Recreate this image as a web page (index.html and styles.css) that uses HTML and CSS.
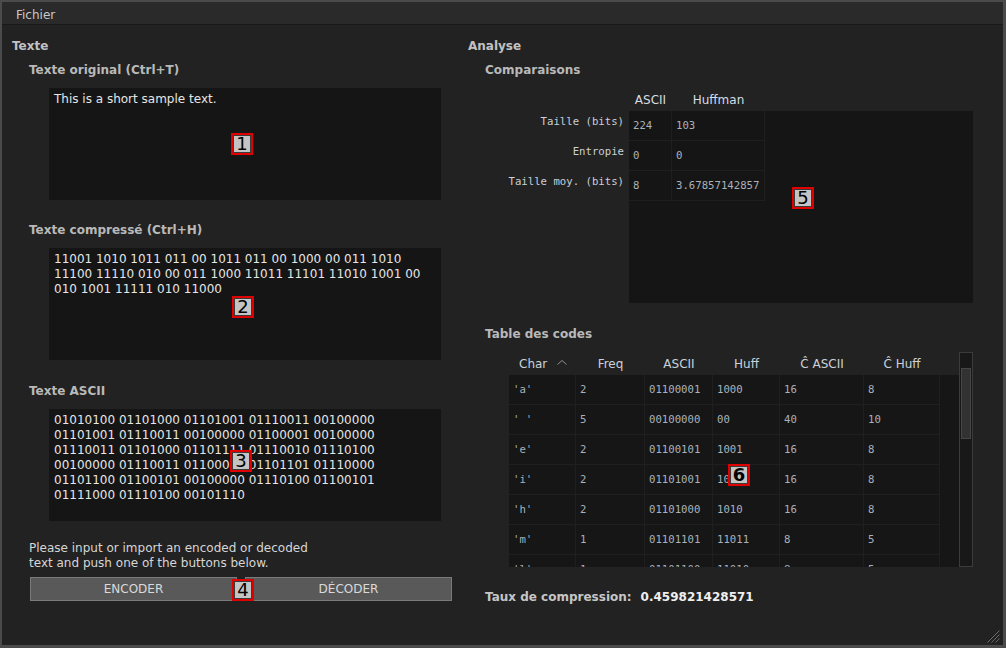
FILE: index.html
```html
<!DOCTYPE html>
<html lang="fr">
<head>
<meta charset="utf-8">
<title>Huffman</title>
<link rel="stylesheet" href="styles.css">
</head>
<body>
<div class="app">
  <div class="menubar"><span class="menu-item">Fichier</span></div>
  <div class="main">
    <section class="panel panel-left">
      <h2 class="group-title">Texte</h2>
      <div class="field field-first">
        <h3 class="sub-title">Texte original (Ctrl+T)</h3>
        <div class="textbox">This is a short sample text.</div>
      </div>
      <div class="field field-second">
        <h3 class="sub-title">Texte compressé (Ctrl+H)</h3>
        <div class="textbox">11001 1010 1011 011 00 1011 011 00 1000 00 011 1010<br>11100 11110 010 00 011 1000 11011 11101 11010 1001 00<br>010 1001 11111 010 11000</div>
      </div>
      <div class="field field-third">
        <h3 class="sub-title">Texte ASCII</h3>
        <div class="textbox">01010100 01101000 01101001 01110011 00100000<br>01101001 01110011 00100000 01100001 00100000<br>01110011 01101000 01101111 01110010 01110100<br>00100000 01110011 01100001 01101101 01110000<br>01101100 01100101 00100000 01110100 01100101<br>01111000 01110100 00101110</div>
      </div>
      <p class="hint">Please input or import an encoded or decoded<br>text and push one of the buttons below.</p>
      <div class="buttons">
        <button class="btn">ENCODER</button>
        <button class="btn">DÉCODER</button>
      </div>
    </section>

    <section class="panel panel-right">
      <h2 class="group-title">Analyse</h2>
      <h3 class="sub-title sub-first">Comparaisons</h3>
      <div class="compare">
        <div class="corner"></div>
        <div class="cmp-head">
          <div class="hcell c-ascii">ASCII</div>
          <div class="hcell c-huff">Huffman</div>
        </div>
        <div class="cmp-rowheads">
          <div class="rowhead">Taille (bits)</div>
          <div class="rowhead">Entropie</div>
          <div class="rowhead">Taille moy. (bits)</div>
        </div>
        <div class="cmp-body">
          <div class="cmp-grid">
            <div class="cell c-ascii">224</div><div class="cell c-huff">103</div>
            <div class="cell c-ascii">0</div><div class="cell c-huff">0</div>
            <div class="cell c-ascii">8</div><div class="cell c-huff">3.67857142857</div>
          </div>
        </div>
      </div>

      <h3 class="sub-title sub-codes">Table des codes</h3>
      <div class="codes">
        <div class="codes-gutter"></div>
        <div class="codes-table">
          <div class="codes-head">
            <div class="hcell k1">Char<svg class="sort" width="10" height="5" viewBox="0 0 10 5"><polyline points="0.5,4.5 5,0.5 9.5,4.5" fill="none" stroke="#8a9096" stroke-width="1"/></svg></div>
            <div class="hcell k2">Freq</div>
            <div class="hcell k3">ASCII</div>
            <div class="hcell k4">Huff</div>
            <div class="hcell k5">Ĉ ASCII</div>
            <div class="hcell k6">Ĉ Huff</div>
          </div>
          <div class="codes-body">
            <div class="row"><div class="cell k1">'a'</div><div class="cell k2">2</div><div class="cell k3">01100001</div><div class="cell k4">1000</div><div class="cell k5">16</div><div class="cell k6">8</div></div>
            <div class="row"><div class="cell k1">' '</div><div class="cell k2">5</div><div class="cell k3">00100000</div><div class="cell k4">00</div><div class="cell k5">40</div><div class="cell k6">10</div></div>
            <div class="row"><div class="cell k1">'e'</div><div class="cell k2">2</div><div class="cell k3">01100101</div><div class="cell k4">1001</div><div class="cell k5">16</div><div class="cell k6">8</div></div>
            <div class="row"><div class="cell k1">'i'</div><div class="cell k2">2</div><div class="cell k3">01101001</div><div class="cell k4">1011</div><div class="cell k5">16</div><div class="cell k6">8</div></div>
            <div class="row"><div class="cell k1">'h'</div><div class="cell k2">2</div><div class="cell k3">01101000</div><div class="cell k4">1010</div><div class="cell k5">16</div><div class="cell k6">8</div></div>
            <div class="row"><div class="cell k1">'m'</div><div class="cell k2">1</div><div class="cell k3">01101101</div><div class="cell k4">11011</div><div class="cell k5">8</div><div class="cell k6">5</div></div>
            <div class="row"><div class="cell k1">'l'</div><div class="cell k2">1</div><div class="cell k3">01101100</div><div class="cell k4">11010</div><div class="cell k5">8</div><div class="cell k6">5</div></div>
          </div>
        </div>
        <div class="scrollbar"><div class="thumb"></div></div>
      </div>

      <p class="ratio"><span class="ratio-label">Taux de compression:</span><span class="ratio-value">0.459821428571</span></p>
    </section>
  </div>

  <svg class="grip" width="13" height="13" viewBox="0 0 13 13">
    <line x1="12.5" y1="0.5" x2="0.5" y2="12.5" stroke="#6b6b6b"/>
    <line x1="12.5" y1="4.5" x2="4.5" y2="12.5" stroke="#6b6b6b"/>
    <line x1="12.5" y1="8.5" x2="8.5" y2="12.5" stroke="#6b6b6b"/>
  </svg>

  <div class="badge b1">1</div>
  <div class="badge b2">2</div>
  <div class="badge b3">3</div>
  <div class="badge b4">4</div>
  <div class="badge b5">5</div>
  <div class="badge b6">6</div>
</div>
</body>
</html>
```

FILE: styles.css
```css
html, body {
  margin: 0;
  padding: 0;
  background: #4b4b4b;
}

body {
  font-family: "DejaVu Sans", "Liberation Sans", sans-serif;
  font-size: 12px;
  color: #d4d4d4;
}

.app {
  position: relative;
  width: 1006px;
  height: 648px;
  box-sizing: border-box;
  border-style: solid;
  border-color: #4b4b4b;
  border-width: 2px 3px 3px 2px;
  background: #222222;
  display: flex;
  flex-direction: column;
  overflow: hidden;
}

.menubar {
  height: 23px;
  box-sizing: border-box;
  flex: none;
  background: #2a2a2a;
  border-bottom: 1px solid #181818;
  display: flex;
  align-items: center;
  padding: 3px 0 0 14px;
}

.menu-item {
  color: #c8c8c8;
  line-height: 16px;
}

.main {
  flex: 1;
  display: grid;
  grid-template-columns: 464px 537px;
}

.panel {
  display: flex;
  flex-direction: column;
  padding-top: 13px;
}

.panel-left {
  padding-left: 10px;
}

.panel-right {
  padding-left: 2px;
}

.group-title {
  margin: 0;
  font-size: 12px;
  font-weight: bold;
  line-height: 16px;
  color: #c2c2c2;
}

.sub-title {
  margin: 0;
  font-size: 12px;
  font-weight: bold;
  line-height: 16px;
  color: #b9b9b9;
}

/* left column */
.field {
  padding-left: 17px;
}

.field-first {
  margin-top: 8px;
}

.field-second {
  margin-top: 22px;
}

.field-third {
  margin-top: 23px;
}

.field .sub-title {
  margin-bottom: 10px;
}

.textbox {
  margin-left: 20px;
  width: 392px;
  height: 112px;
  box-sizing: border-box;
  padding: 4px 5px;
  background: #151515;
  color: #e6e6e6;
  line-height: 15px;
  white-space: nowrap;
  overflow: hidden;
}

.hint {
  margin: 20px 0 0 17px;
  line-height: 15px;
  color: #d6d6d6;
}

.buttons {
  margin: 6px 0 0 18px;
  width: 422px;
  display: flex;
  gap: 8px;
}

.btn {
  flex: 1;
  height: 24px;
  margin: 0;
  padding: 0;
  background: #595959;
  border: 1px solid #7a7a7a;
  color: #dadada;
  font-family: "DejaVu Sans", "Liberation Sans", sans-serif;
  font-size: 12px;
}

/* right column */
.sub-first {
  margin: 8px 0 0 17px;
}

.compare {
  margin: 10px 0 0 17px;
  width: 488px;
  display: grid;
  grid-template-columns: 144px 344px;
  grid-template-rows: 23px 192px;
}

.cmp-head {
  display: flex;
}

.hcell {
  display: flex;
  align-items: center;
  justify-content: center;
  color: #d6dde4;
  line-height: 16px;
}

.c-ascii {
  width: 43px;
  flex: none;
}

.c-huff {
  width: 93px;
  flex: none;
}

.cmp-rowheads {
  display: flex;
  flex-direction: column;
}

.rowhead {
  height: 30px;
  box-sizing: border-box;
  padding: 4px 5px 0 0;
  text-align: right;
  font-family: "DejaVu Sans Mono", "Liberation Mono", monospace;
  font-size: 10.67px;
  line-height: 14px;
  color: #c9d0d8;
}

.cmp-body {
  background: #151515;
}

.cmp-grid {
  display: grid;
  grid-template-columns: 43px 93px;
  grid-auto-rows: 30px;
  width: 136px;
}

.cell {
  box-sizing: border-box;
  display: flex;
  align-items: center;
  padding-left: 4px;
  border-right: 1px solid #1f1f1f;
  border-bottom: 1px solid #1f1f1f;
  font-family: "DejaVu Sans Mono", "Liberation Mono", monospace;
  font-size: 10.67px;
  color: #a9b1ba;
  white-space: nowrap;
}

.sub-codes {
  margin: 23px 0 0 17px;
}

.codes {
  margin: 10px 0 0 17px;
  width: 488px;
  height: 215px;
  display: grid;
  grid-template-columns: 24px 450px 14px;
}

.codes-table {
  display: flex;
  flex-direction: column;
  overflow: hidden;
}

.codes-head {
  height: 23px;
  flex: none;
  display: flex;
}

.codes-head .hcell {
  color: #c9d2dc;
}

.sort {
  margin-left: 10px;
  margin-top: -3px;
}

.codes-body {
  flex: 1;
  background: #161616;
  overflow: hidden;
}

.row {
  display: flex;
  height: 30px;
}

.k1 { width: 67px; flex: none; }
.k2 { width: 69px; flex: none; }
.k3 { width: 68px; flex: none; }
.k4 { width: 67px; flex: none; }
.k5 { width: 84px; flex: none; }
.k6 { width: 76px; flex: none; }

.codes-head .k1 {
  padding-left: 10px;
  box-sizing: border-box;
  justify-content: flex-start;
}

.scrollbar {
  box-sizing: border-box;
  border: 1px solid #3b3b3b;
  background: #181818;
  padding: 15px 1px 0 1px;
}

.thumb {
  height: 71px;
  box-sizing: border-box;
  background: #323232;
  border: 1px solid #464646;
}

.ratio {
  margin: 22px 0 0 17px;
  line-height: 16px;
  font-weight: bold;
}

.ratio-label {
  color: #c6c6c6;
}

.ratio-value {
  margin-left: 9px;
  color: #efefef;
}

/* overlays */
.grip {
  position: absolute;
  right: 3px;
  bottom: 2px;
}

.badge {
  position: absolute;
  width: 22px;
  height: 22px;
  box-sizing: border-box;
  border: 2px solid #e00000;
  box-shadow: inset 0 0 0 1px #3a3a3a;
  background: #c4c4c4;
  color: #000;
  font-family: "DejaVu Sans", sans-serif;
  font-size: 18px;
  line-height: 18px;
  text-align: center;
}

.b1 { left: 229px; top: 131px; }
.b2 { left: 230px; top: 294px; }
.b3 { left: 228px; top: 448px; }
.b4 { left: 230px; top: 577px; }
.b5 { left: 790px; top: 185px; }
.b6 { left: 726px; top: 462px; font-weight: bold; }
```
